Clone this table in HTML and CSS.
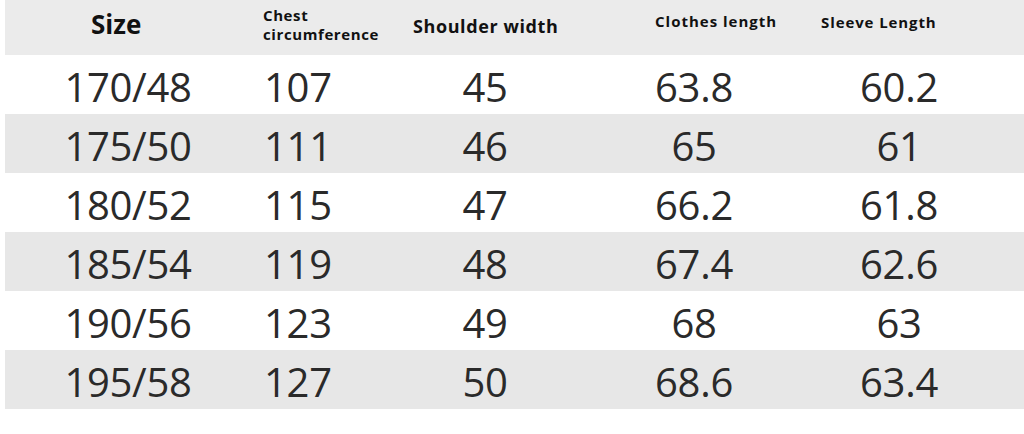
FILE: index.html
```html
<!DOCTYPE html>
<html lang="en">
<head>
<meta charset="utf-8">
<title>Size chart</title>
<link rel="stylesheet" href="styles.css">
</head>
<body>
<div class="chart">
  <div class="row head">
    <div class="c c1 h-size">Size</div>
    <div class="c c2 h-chest"><span>Chest</span><span>circumference</span></div>
    <div class="c c3 h-shoulder">Shoulder width</div>
    <div class="c c4 h-clothes">Clothes length</div>
    <div class="c c5 h-sleeve">Sleeve Length</div>
  </div>
  <div class="row"><div class="c c1">170/48</div><div class="c c2">107</div><div class="c c3">45</div><div class="c c4">63.8</div><div class="c c5">60.2</div></div>
  <div class="row alt"><div class="c c1">175/50</div><div class="c c2">111</div><div class="c c3">46</div><div class="c c4">65</div><div class="c c5">61</div></div>
  <div class="row"><div class="c c1">180/52</div><div class="c c2">115</div><div class="c c3">47</div><div class="c c4">66.2</div><div class="c c5">61.8</div></div>
  <div class="row alt"><div class="c c1">185/54</div><div class="c c2">119</div><div class="c c3">48</div><div class="c c4">67.4</div><div class="c c5">62.6</div></div>
  <div class="row"><div class="c c1">190/56</div><div class="c c2">123</div><div class="c c3">49</div><div class="c c4">68</div><div class="c c5">63</div></div>
  <div class="row alt"><div class="c c1">195/58</div><div class="c c2">127</div><div class="c c3">50</div><div class="c c4">68.6</div><div class="c c5">63.4</div></div>
</div>
</body>
</html>
```

FILE: styles.css
```css
html, body {
  margin: 0;
  padding: 0;
  background: #ffffff;
}
body {
  width: 1024px;
  height: 434px;
  overflow: hidden;
  font-family: "Open Sans", "Noto Sans", sans-serif;
}
.chart {
  margin-left: 5px;
  display: flex;
  flex-direction: column;
}
.row {
  display: grid;
  grid-template-columns: 246px 149px 170px 248px 162px 1fr;
  height: 59px;
  align-items: center;
  color: #2a2a2a;
  font-size: 40px;
  font-weight: 500;
  letter-spacing: -0.3px;
}
.row.alt {
  background: #e7e7e7;
}
.row.head {
  height: 55px;
  background: #ebebeb;
  color: #111;
  font-weight: 700;
  letter-spacing: 0;
}
.c {
  text-align: center;
  line-height: 1;
  padding-top: 4px;
}
.c2 {
  text-align: left;
  padding-left: 13px;
}
.head .c {
  text-align: left;
  padding-top: 0;
}
.h-size {
  font-size: 26px;
  padding-left: 86px;
  padding-bottom: 8px;
}
.h-chest {
  display: flex;
  flex-direction: column;
  font-size: 15px;
  line-height: 19px;
  padding-left: 12px !important;
  letter-spacing: 0.6px;
  padding-bottom: 6px;
}
.h-shoulder {
  font-size: 18px;
  padding-left: 13px;
  letter-spacing: 0.6px;
  padding-bottom: 4px;
}
.h-clothes {
  font-size: 15px;
  padding-left: 85px;
  letter-spacing: 1px;
  padding-bottom: 12px;
}
.h-sleeve {
  font-size: 15px;
  padding-left: 3px;
  letter-spacing: 0.9px;
  padding-bottom: 10px;
}
```
